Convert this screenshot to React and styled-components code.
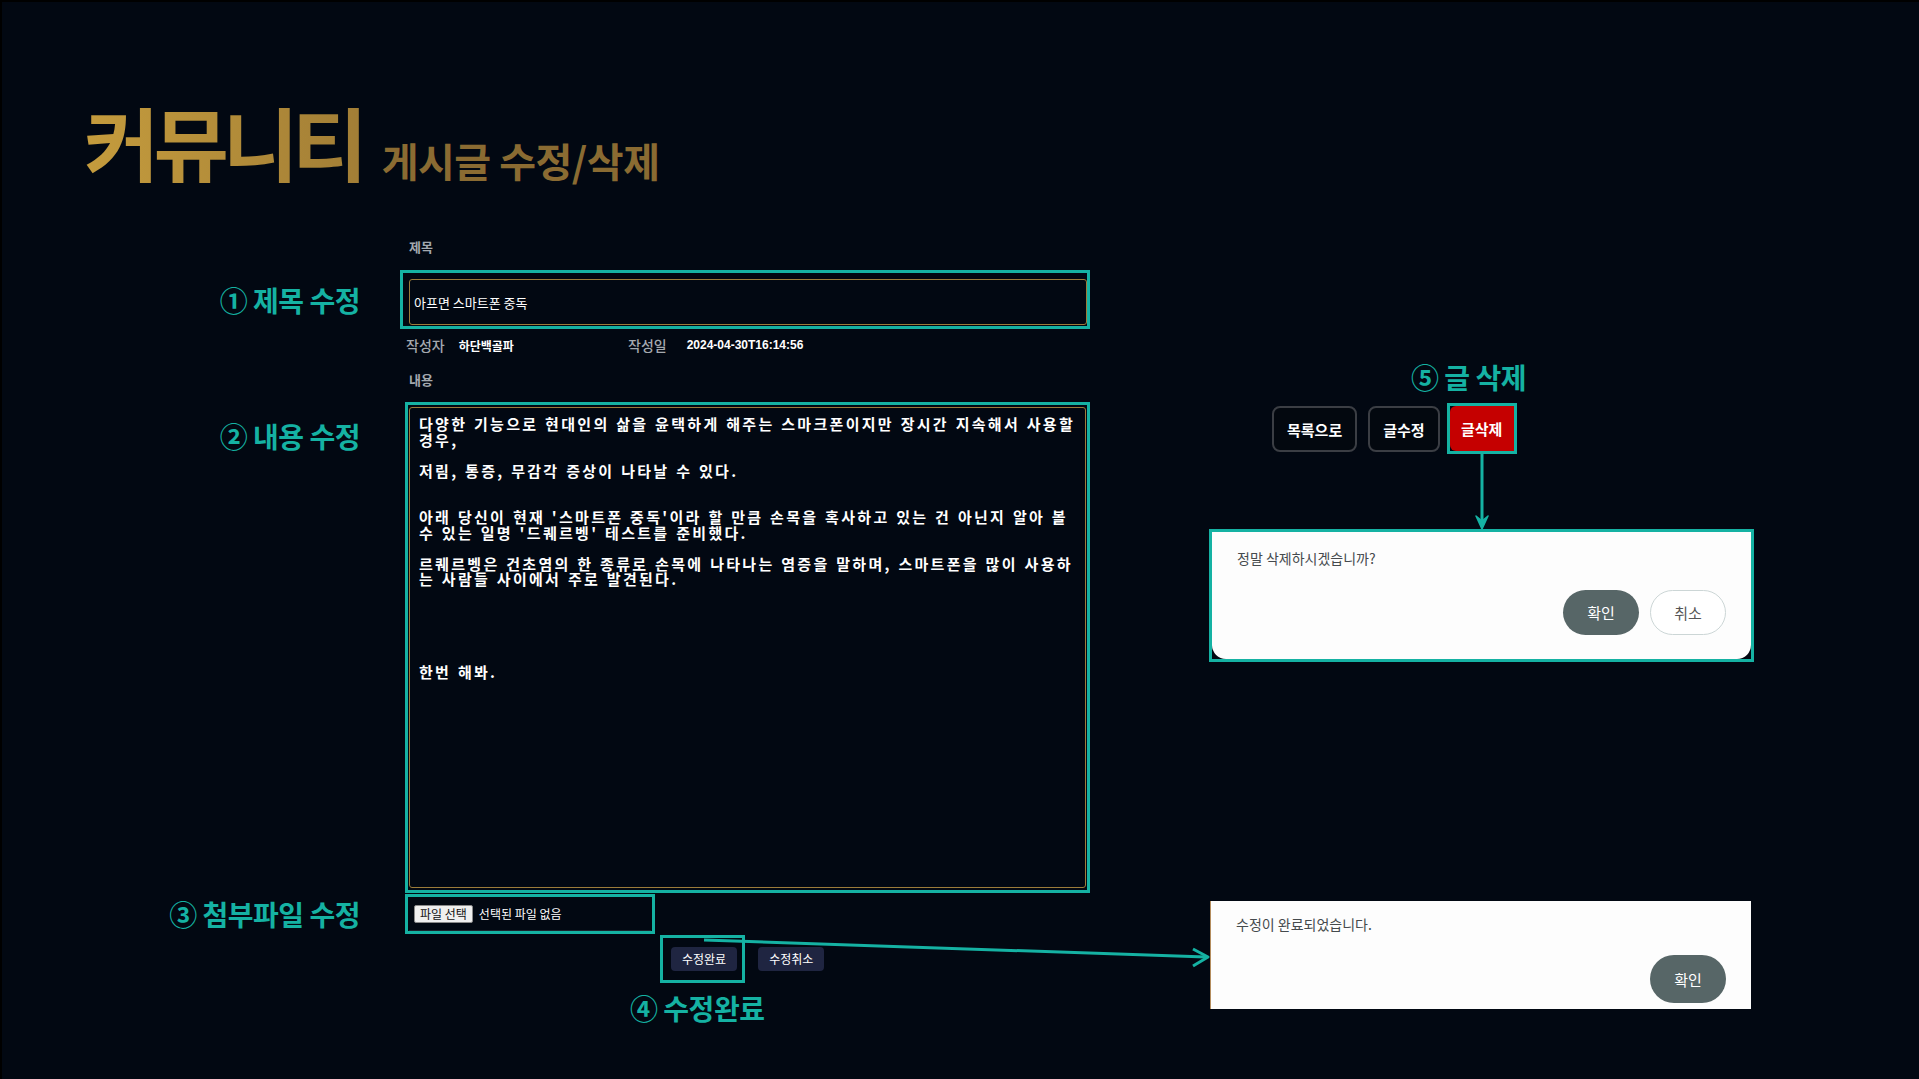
import React from "react";
import styled, { createGlobalStyle } from "styled-components";

const TEAL = "#15b2a3";

const GlobalStyle = createGlobalStyle`
  html, body { margin: 0; padding: 0; background: #020812; }
  body { font-family: "Noto Sans CJK KR", "Noto Sans", sans-serif; }
  * { box-sizing: border-box; }
`;

const Page = styled.div`
  position: relative;
  width: 1919px;
  height: 1079px;
  background: #020812;
  box-shadow: inset 2px 2px 0 #000;
  overflow: hidden;
  font-family: "Noto Sans CJK KR", sans-serif;
`;

const Header = styled.header`
  display: flex;
  align-items: baseline;
  gap: 20px;
  padding: 101px 0 0 84px;
`;

const Title = styled.h1`
  margin: 0;
  font-size: 82px;
  font-weight: 700;
  line-height: 1;
  letter-spacing: -6px;
  background: linear-gradient(90deg, #c59c3d, #a27e36);
  -webkit-background-clip: text;
  background-clip: text;
  color: transparent;
`;

const Subtitle = styled.h2`
  margin: 0;
  font-size: 40px;
  font-weight: 700;
  line-height: 1;
  letter-spacing: -0.5px;
  color: #8a6b32;
`;

const Main = styled.main`
  display: flex;
  align-items: flex-start;
  padding-top: 55px;
`;

const FormGrid = styled.div`
  display: grid;
  grid-template-columns: 360px 685px;
  column-gap: 45px;
  width: 1090px;
`;

const Spacer = styled.div``;

const Annot = styled.div`
  font-size: 28px;
  font-weight: 700;
  line-height: 34px;
  color: ${TEAL};
  white-space: nowrap;
  letter-spacing: -0.5px;
  justify-self: ${(p) => p.$justify || "end"};
  align-self: ${(p) => p.$align || "center"};
  margin-top: ${(p) => p.$mt || 0}px;
  margin-left: ${(p) => p.$ml || 0}px;
  padding-left: ${(p) => p.$pl || 0}px;
`;

const FieldLabel = styled.div`
  font-size: 13px;
  font-weight: 700;
  line-height: 18px;
  color: #a4a9af;
  padding-left: 4px;
  margin-top: ${(p) => p.$mt || 0}px;
`;

const TitleMark = styled.div`
  margin-top: 14px;
  margin-left: -5px;
  border: 3px solid ${TEAL};
  padding: 6px 0 1px 6px;
`;

const TitleInput = styled.div`
  height: 46px;
  border: 1px solid #9c7c3a;
  border-radius: 3px;
  display: flex;
  align-items: center;
  padding-left: 4px;
  color: #fff;
  font-size: 13px;
`;

const MetaRow = styled.div`
  display: flex;
  align-items: center;
  height: 18px;
  margin-top: 7px;
  padding-left: 1px;
`;

const MetaItem = styled.div`
  display: flex;
  align-items: center;
  width: ${(p) => (p.$w ? `${p.$w}px` : "auto")};
  gap: ${(p) => p.$gap}px;
`;

const MetaLabel = styled.span`
  font-size: 14px;
  font-weight: 500;
  color: #a4a9af;
`;

const MetaValue = styled.span`
  font-size: 12px;
  font-weight: 700;
  color: #fff;
  font-family: ${(p) => (p.$num ? '"Liberation Sans Narrow", "Liberation Sans", sans-serif' : "inherit")};
`;

const ContentMark = styled.div`
  margin-top: 13px;
  border: 3px solid ${TEAL};
  padding: 2px 1px 2px 1px;
`;

const ContentArea = styled.div`
  height: 481px;
  border: 1px solid #9c7c3a;
  border-radius: 3px;
  padding: 8px 9px;
  color: #fff;
  font-family: "Noto Sans CJK KR", monospace;
  font-size: 15px;
  font-weight: 700;
  line-height: 15.5px;
  letter-spacing: 2.3px;
  word-spacing: 1px;
  white-space: pre;
  overflow: hidden;
`;

const FileMark = styled.div`
  margin-top: 1px;
  width: 250px;
  height: 40px;
  border: 3px solid ${TEAL};
  padding: 0 1px 0 1px;
`;

const FileInner = styled.div`
  height: 100%;
  display: flex;
  align-items: center;
  gap: 6px;
  padding-left: 5px;
  border-bottom: 1px solid #1c232e;
`;

const FileButton = styled.span`
  display: inline-flex;
  align-items: center;
  height: 18px;
  padding: 0 5px;
  background: #efefef;
  border: 1px solid #8a8a8a;
  border-radius: 2px;
  font-size: 12px;
  color: #111;
`;

const FileText = styled.span`
  font-size: 12px;
  color: #fff;
`;

const ActionRow = styled.div`
  display: flex;
  align-items: center;
  gap: 13px;
  margin-top: 1px;
  padding-left: 255px;
`;

const ActionMark = styled.div`
  border: 3px solid ${TEAL};
  padding: 7px 5px 9px 8px;
`;

const SmallButton = styled.button`
  height: 24px;
  padding: 0 11px;
  border: none;
  border-radius: 4px;
  background: #1f2541;
  color: #fff;
  font-family: inherit;
  font-size: 12px;
  line-height: 24px;
`;

const RightCol = styled.div`
  display: flex;
  flex-direction: column;
  align-items: flex-start;
  margin-left: 119px;
  width: 545px;
`;

const ButtonRow = styled.div`
  display: flex;
  align-items: flex-start;
  gap: 11px;
  margin-top: 9px;
  padding-left: 63px;
`;

const OutlineButton = styled.button`
  margin-top: 3px;
  height: 46px;
  padding: 0 13px;
  border: 2px solid #3b3e44;
  border-radius: 8px;
  background: #03080f;
  color: #fff;
  font-family: inherit;
  font-size: 15px;
  font-weight: 700;
`;

const DeleteCol = styled.div`
  display: flex;
  flex-direction: column;
  align-items: center;
  margin-left: -4px;
`;

const DeleteMark = styled.div`
  border: 3px solid ${TEAL};
`;

const DangerButton = styled.button`
  display: block;
  width: 64px;
  height: 45px;
  border: none;
  border-radius: 6px 0 0 6px;
  background: #c50000;
  color: #fff;
  font-family: inherit;
  font-size: 15px;
  font-weight: 700;
`;

const Dialog = styled.div`
  display: flex;
  flex-direction: column;
  ${(p) =>
    p.$marked
      ? `border: 3px solid ${TEAL}; background: transparent;`
      : `border-left: 1px solid #b48d5e; background: #fdfdfd;`}
  margin-top: ${(p) => p.$mt || 0}px;
  margin-left: ${(p) => p.$ml || 0}px;
  width: ${(p) => p.$w}px;
  height: ${(p) => p.$h}px;
  padding: ${(p) => p.$pad};
`;

const DialogInner = styled.div`
  flex: 1;
  display: flex;
  flex-direction: column;
  background: #fdfdfd;
  border-radius: 0 0 14px 14px;
  padding: ${(p) => p.$pad};
`;

const DialogText = styled.div`
  font-size: 14px;
  line-height: 20px;
  color: #454a4d;
`;

const DialogActions = styled.div`
  display: flex;
  justify-content: flex-end;
  gap: 11px;
  margin-top: ${(p) => p.$mt}px;
`;

const Pill = styled.button`
  width: 76px;
  height: ${(p) => p.$h || 45}px;
  border-radius: 24px;
  font-family: inherit;
  font-size: 15px;
  ${(p) =>
    p.$primary
      ? `background: #576667; color: #fff; border: none;`
      : `background: #fff; color: #555; border: 1px solid #ccd6d6;`}
`;

const Overlay = styled.svg`
  position: absolute;
  left: 0;
  top: 0;
  pointer-events: none;
`;

const CONTENT = `다양한 기능으로 현대인의 삶을 윤택하게 해주는 스마크폰이지만 장시간 지속해서 사용할
경우,

저림, 통증, 무감각 증상이 나타날 수 있다.


아래 당신이 현재 '스마트폰 중독'이라 할 만큼 손목을 혹사하고 있는 건 아닌지 알아 볼
수 있는 일명 '드퀘르벵' 테스트를 준비했다.

르퀘르벵은 건초염의 한 종류로 손목에 나타나는 염증을 말하며, 스마트폰을 많이 사용하
는 사람들 사이에서 주로 발견된다.





한번 해봐.`;

function DownArrow() {
  return (
    <svg width="14" height="75" viewBox="0 0 14 75">
      <line x1="7" y1="0" x2="7" y2="70" stroke={TEAL} strokeWidth="3" />
      <path d="M1 62 L7 75 L13 62 L7 67 Z" fill={TEAL} stroke={TEAL} strokeWidth="1.5" strokeLinejoin="round" />
    </svg>
  );
}

export default function App() {
  return (
    <Page>
      <GlobalStyle />
      <Header>
        <Title>커뮤니티</Title>
        <Subtitle>게시글 수정/삭제</Subtitle>
      </Header>
      <Main>
        <FormGrid>
          <Spacer />
          <FieldLabel>제목</FieldLabel>

          <Annot $mt={14}>① 제목 수정</Annot>
          <TitleMark>
            <TitleInput>아프면 스마트폰 중독</TitleInput>
          </TitleMark>

          <Spacer />
          <MetaRow>
            <MetaItem $w={222} $gap={14}>
              <MetaLabel>작성자</MetaLabel>
              <MetaValue>하단백골파</MetaValue>
            </MetaItem>
            <MetaItem $gap={20}>
              <MetaLabel>작성일</MetaLabel>
              <MetaValue $num>2024-04-30T16:14:56</MetaValue>
            </MetaItem>
          </MetaRow>

          <Spacer />
          <FieldLabel $mt={17}>내용</FieldLabel>

          <Annot $align="start" $mt={30}>② 내용 수정</Annot>
          <ContentMark>
            <ContentArea>{CONTENT}</ContentArea>
          </ContentMark>

          <Annot>③ 첨부파일 수정</Annot>
          <FileMark>
            <FileInner>
              <FileButton>파일 선택</FileButton>
              <FileText>선택된 파일 없음</FileText>
            </FileInner>
          </FileMark>

          <Spacer />
          <ActionRow>
            <ActionMark>
              <SmallButton>수정완료</SmallButton>
            </ActionMark>
            <SmallButton>수정취소</SmallButton>
          </ActionRow>

          <Spacer />
          <Annot $justify="start" $mt={8} $ml={225}>④ 수정완료</Annot>
        </FormGrid>

        <RightCol>
          <Annot $justify="start" $align="flex-start" $mt={122} $pl={202}>⑤ 글 삭제</Annot>
          <ButtonRow>
            <OutlineButton>목록으로</OutlineButton>
            <OutlineButton>글수정</OutlineButton>
            <DeleteCol>
              <DeleteMark>
                <DangerButton>글삭제</DangerButton>
              </DeleteMark>
              <DownArrow />
            </DeleteCol>
          </ButtonRow>
          <Dialog $marked $w={545} $h={133} $pad="0">
            <DialogInner $pad="16px 25px 23px 25px">
              <DialogText>정말 삭제하시겠습니까?</DialogText>
              <DialogActions $mt={22}>
                <Pill $primary>확인</Pill>
                <Pill>취소</Pill>
              </DialogActions>
            </DialogInner>
          </Dialog>
          <Dialog $w={541} $h={108} $mt={239} $ml={1} $pad="13px 25px 6px 25px">
            <DialogText>수정이 완료되었습니다.</DialogText>
            <DialogActions $mt={21}>
              <Pill $primary $h={48}>확인</Pill>
            </DialogActions>
          </Dialog>
        </RightCol>
      </Main>
      <Overlay width="1919" height="1079" viewBox="0 0 1919 1079">
        <line x1="704" y1="940" x2="1206" y2="957" stroke={TEAL} strokeWidth="3" />
        <polyline points="1193,949 1208,957 1193,966" fill="none" stroke={TEAL} strokeWidth="3" strokeLinejoin="round" />
      </Overlay>
    </Page>
  );
}
